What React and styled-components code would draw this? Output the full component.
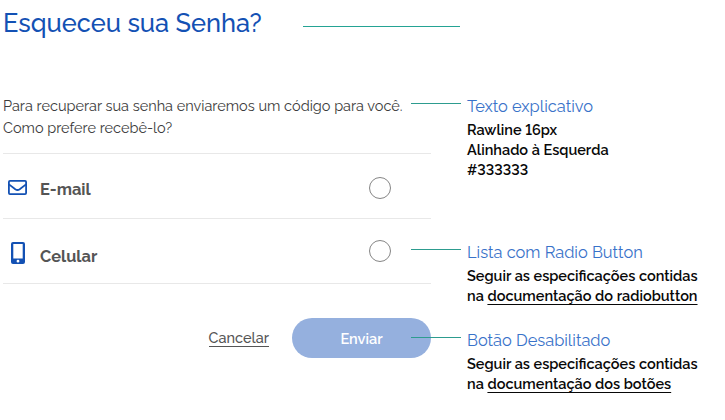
import React from "react";
import styled, { createGlobalStyle } from "styled-components";

const GlobalStyle = createGlobalStyle`
  * { box-sizing: border-box; }
  body {
    margin: 0;
    background: #fff;
    font-family: Raleway, Lato, "Open Sans", sans-serif;
    font-variant-numeric: lining-nums;
  }
`;

const Page = styled.main`
  display: grid;
  grid-template-columns: 428px 1fr;
  column-gap: 36px;
  width: 725px;
  height: 420px;
  padding-left: 3px;
  overflow: hidden;
`;

const Form = styled.section`
  display: flex;
  flex-direction: column;
`;

const TitleRow = styled.header`
  display: flex;
  width: 457px;
  height: 32px;
  margin-top: 7px;
  justify-content: space-between;
`;

const Title = styled.h1`
  margin: 0;
  font-size: 25.4px;
  line-height: 32px;
  font-weight: 500;
  color: #1351b4;
  white-space: nowrap;
`;

const TitleRule = styled.span`
  width: 157px;
  height: 1px;
  margin-top: 19px;
  background: #24a394;
`;

const Intro = styled.p`
  height: 58px;
  margin: 56px 0 0;
  font-size: 14.52px;
  line-height: 22px;
  color: #3c3c3c;
  white-space: nowrap;
`;

const Options = styled.ul`
  margin: 0;
  padding: 0;
  list-style: none;
  border-top: 1px solid #e8e8e8;
`;

const Option = styled.li`
  display: flex;
  align-items: flex-start;
  height: 65px;
  padding: 0 40px 0 5px;
  border-bottom: 1px solid #e8e8e8;
`;

const IconBox = styled.span`
  display: flex;
  justify-content: center;
  width: 19px;
  margin: ${(p) => p.$top}px 13px 0 0;
`;

const OptionLabel = styled.label`
  margin-top: ${(p) => p.$top}px;
  font-size: 16.4px;
  line-height: 20px;
  font-weight: 700;
  color: #555;
`;

const Radio = styled.span`
  width: 22px;
  height: 22px;
  margin: ${(p) => p.$top}px 0 0 auto;
  border: 1px solid #858585;
  border-radius: 50%;
`;

const Actions = styled.footer`
  display: flex;
  align-items: center;
  justify-content: flex-end;
  gap: 23px;
  margin-top: 34px;
`;

const Cancel = styled.a`
  height: 18px;
  border-bottom: 1px solid #555;
  font-size: 14.5px;
  line-height: 18px;
  font-weight: 500;
  color: #555;
`;

const Submit = styled.button`
  width: 139px;
  height: 40px;
  padding: 2px 0 0;
  border: 0;
  border-radius: 20px;
  background: #95b0de;
  color: #fff;
  font: 600 14.5px/20px Raleway, Lato, sans-serif;
`;

const Notes = styled.aside`
  display: flex;
  flex-direction: column;
  padding-top: 96px;
`;

const Note = styled.section`
  position: relative;
  height: ${(p) => p.$height}px;

  &::before {
    content: "";
    position: absolute;
    top: 7px;
    left: -56px;
    width: 50px;
    height: 1px;
    background: #2d9c8f;
  }
`;

const NoteTitle = styled.h2`
  margin: 0 0 2px;
  font-size: 16.42px;
  line-height: 22px;
  font-weight: 400;
  color: #3972c9;
  white-space: nowrap;
`;

const NoteLine = styled.div`
  font-size: 14.5px;
  line-height: 20px;
  font-weight: 600;
  color: #080808;
  white-space: nowrap;
`;

const DocLink = styled.a`
  text-decoration: underline;
  text-decoration-thickness: 1px;
  text-underline-offset: 3px;
`;

const MailIcon = () => (
  <svg width="19" height="15" viewBox="0 0 19 15" fill="none" stroke="#1351b4" strokeWidth="1.8">
    <rect x="0.9" y="0.9" width="17.2" height="13.2" rx="1.1" />
    <path d="M1 4.4 7.3 9.2Q9.5 10.8 11.7 9.2L18 4.4" />
  </svg>
);

const PhoneIcon = () => (
  <svg width="14" height="22" viewBox="0 0 14 22">
    <path
      fill="#1351b4"
      fillRule="evenodd"
      d="M2 0h10a2 2 0 0 1 2 2v18a2 2 0 0 1-2 2H2a2 2 0 0 1-2-2V2a2 2 0 0 1 2-2Zm.3 2v14.5h9.4V2ZM7 17.8a1.4 1.4 0 1 0 0 2.8 1.4 1.4 0 0 0 0-2.8Z"
    />
  </svg>
);

export default function App() {
  return (
    <>
      <GlobalStyle />
      <Page>
        <Form>
          <TitleRow>
            <Title>Esqueceu sua Senha?</Title>
            <TitleRule />
          </TitleRow>
          <Intro>
            Para recuperar sua senha enviaremos um código para você.
            <br />
            Como prefere recebê-lo?
          </Intro>
          <Options>
            <Option>
              <IconBox $top={26}><MailIcon /></IconBox>
              <OptionLabel $top={26}>E-mail</OptionLabel>
              <Radio $top={23} />
            </Option>
            <Option>
              <IconBox $top={23}><PhoneIcon /></IconBox>
              <OptionLabel $top={28}>Celular</OptionLabel>
              <Radio $top={20.5} />
            </Option>
          </Options>
          <Actions>
            <Cancel>Cancelar</Cancel>
            <Submit disabled>Enviar</Submit>
          </Actions>
        </Form>
        <Notes>
          <Note $height={146}>
            <NoteTitle>Texto explicativo</NoteTitle>
            <NoteLine>Rawline 16px</NoteLine>
            <NoteLine>Alinhado à Esquerda</NoteLine>
            <NoteLine>#333333</NoteLine>
          </Note>
          <Note $height={88}>
            <NoteTitle>Lista com Radio Button</NoteTitle>
            <NoteLine>Seguir as especificações contidas</NoteLine>
            <NoteLine>na <DocLink>documentação do radiobutton</DocLink></NoteLine>
          </Note>
          <Note $height={80}>
            <NoteTitle>Botão Desabilitado</NoteTitle>
            <NoteLine>Seguir as especificações contidas</NoteLine>
            <NoteLine>na <DocLink>documentação dos botões</DocLink></NoteLine>
          </Note>
        </Notes>
      </Page>
    </>
  );
}
